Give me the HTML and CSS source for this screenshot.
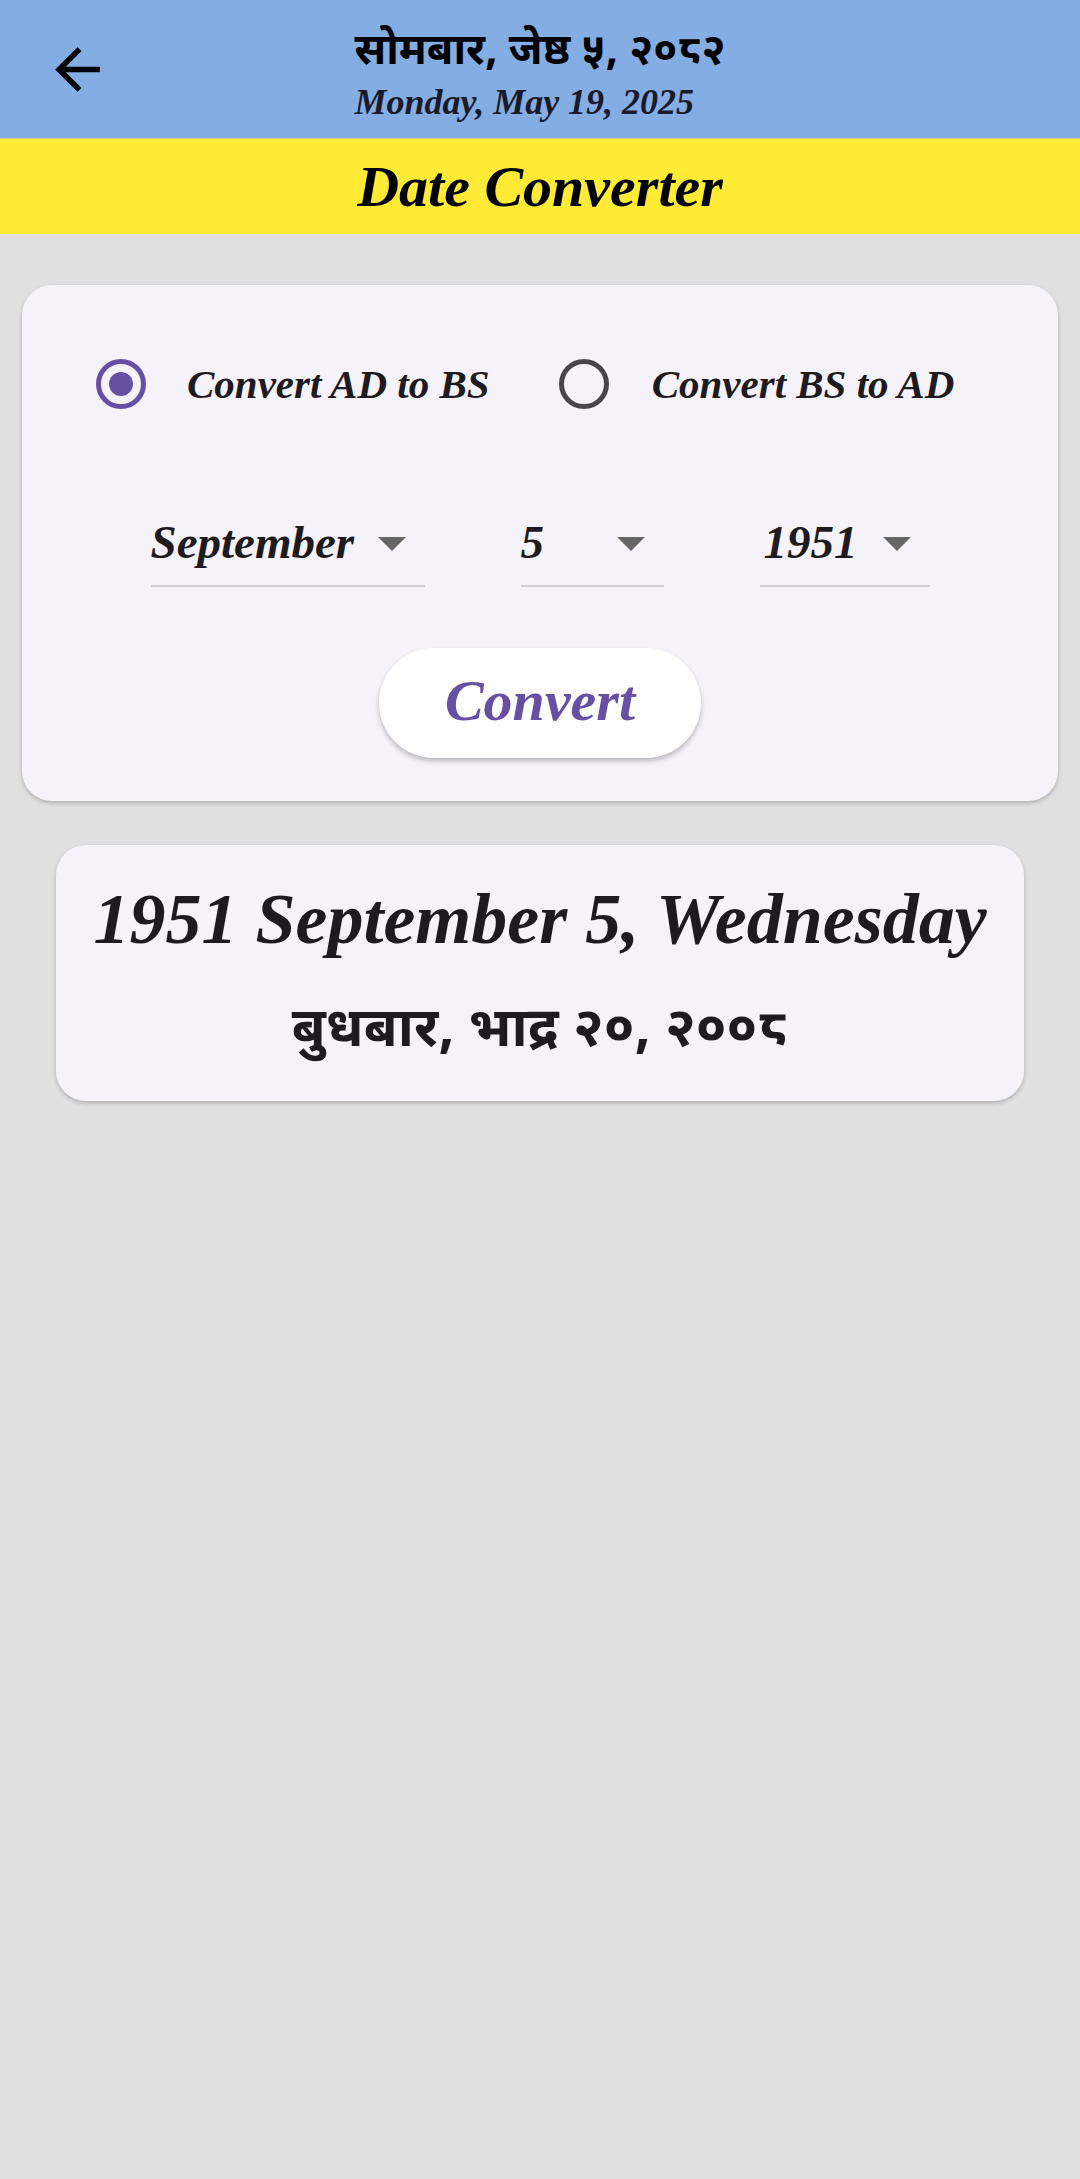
FILE: index.html
```html
<!DOCTYPE html>
<html lang="ne">
<head>
<meta charset="utf-8">
<title>Date Converter</title>
<link rel="stylesheet" href="styles.css">
</head>
<body>
<header class="appbar">
  <div class="appbar-lead">
    <svg class="back-icon" viewBox="0 0 24 24" aria-label="Back"><path d="M20 11H7.83l5.59-5.59L12 4l-8 8 8 8 1.41-1.41L7.83 13H20v-2z"/></svg>
  </div>
  <div class="appbar-title">
    <div class="title-np">सोमबार, जेष्ठ ५, २०८२</div>
    <div class="title-en">Monday, May 19, 2025</div>
  </div>
  <div></div>
</header>
<div class="banner">Date Converter</div>
<main class="content">
  <section class="card converter">
    <div class="radio-row">
      <div class="radio-item">
        <span class="radio radio-on"></span>
        <span class="radio-label">Convert AD to BS</span>
      </div>
      <div class="radio-item">
        <span class="radio radio-off"></span>
        <span class="radio-label">Convert BS to AD</span>
      </div>
    </div>
    <div class="dropdown-row">
      <div class="dropdown dd-month"><span class="dd-value">September</span><span class="dd-arrow"></span></div>
      <div class="dropdown dd-day"><span class="dd-value">5</span><span class="dd-arrow"></span></div>
      <div class="dropdown dd-year"><span class="dd-value">1951</span><span class="dd-arrow"></span></div>
    </div>
    <div class="button-row">
      <button class="convert-btn" type="button">Convert</button>
    </div>
  </section>
  <section class="card result">
    <div class="result-en">1951 September 5, Wednesday</div>
    <div class="result-np">बुधबार, भाद्र २०, २००८</div>
  </section>
</main>
</body>
</html>
```
FILE: styles.css
```css
html, body {
  margin: 0;
  padding: 0;
}
body {
  background: #e0e0e0;
  min-height: 2179px;
  font-family: "Liberation Serif", serif;
  color: #1d1b20;
}
.appbar {
  height: 138px;
  background: #84ade3;
  display: grid;
  grid-template-columns: 1fr auto 1fr;
  align-items: center;
}
.appbar-lead {
  padding-left: 44px;
  display: flex;
  align-items: center;
}
.back-icon {
  width: 67px;
  height: 67px;
  fill: #000;
}
.appbar-title {
  display: flex;
  flex-direction: column;
  align-items: flex-start;
  color: #000;
  padding-top: 14px;
}
.title-np {
  font-family: "Noto Sans Devanagari", "Noto Sans", sans-serif;
  font-weight: 700;
  font-size: 43px;
  line-height: 52px;
}
.title-en {
  font-family: "Liberation Serif", serif;
  font-style: italic;
  font-weight: 700;
  font-size: 36px;
  line-height: 44px;
  color: #1a1a2a;
}
.banner {
  height: 96px;
  background: #ffeb35;
  display: flex;
  align-items: center;
  justify-content: center;
  font-style: italic;
  font-weight: 700;
  font-size: 58px;
  color: #000;
  border-top: 1px solid #c9d08a;
  box-sizing: border-box;
}
.content {
  padding: 51px 22px;
}
.card {
  background: #f6f2fa;
  border-radius: 30px;
  box-shadow: 0 2px 4px rgba(0, 0, 0, 0.22);
}
.converter {
  padding: 69px 0 43px;
}
.radio-row {
  display: flex;
  align-items: center;
  height: 60px;
  padding-left: 74px;
}
.radio-item {
  display: flex;
  align-items: center;
}
.radio-item + .radio-item {
  margin-left: 69px;
}
.radio {
  width: 50px;
  height: 50px;
  box-sizing: border-box;
  border-radius: 50%;
  border: 5px solid #49454f;
  display: flex;
  align-items: center;
  justify-content: center;
}
.radio-on {
  border-color: #6750a4;
}
.radio-on::after {
  content: "";
  width: 24px;
  height: 24px;
  border-radius: 50%;
  background: #6750a4;
}
.radio-label {
  margin-left: 41px;
  font-style: italic;
  font-weight: 700;
  font-size: 41px;
  color: #1d1b20;
}
.radio-off + .radio-label {
  margin-left: 43px;
}
.dropdown-row {
  margin-top: 86px;
  display: flex;
  justify-content: center;
  gap: 96px;
}
.dropdown {
  height: 87px;
  box-sizing: border-box;
  border-bottom: 2px solid #d2cdd6;
  display: flex;
  align-items: flex-start;
  justify-content: space-between;
}
.dd-month { width: 274px; }
.dd-day { width: 143px; }
.dd-year { width: 170px; }
.dd-value {
  font-style: italic;
  font-weight: 700;
  font-size: 47px;
  line-height: 56px;
  padding-top: 14px;
  color: #1d1b20;
}
.dd-year .dd-value {
  padding-left: 4px;
}
.dd-arrow {
  margin-top: 37px;
  margin-right: 19px;
  width: 0;
  height: 0;
  border-left: 14px solid transparent;
  border-right: 14px solid transparent;
  border-top: 14px solid #666666;
}
.button-row {
  margin-top: 61px;
  display: flex;
  justify-content: center;
}
.convert-btn {
  width: 322px;
  height: 110px;
  border: none;
  border-radius: 55px;
  background: #ffffff;
  box-shadow: 0 3px 5px rgba(0, 0, 0, 0.25);
  font-family: "Liberation Serif", serif;
  font-style: italic;
  font-weight: 700;
  font-size: 58px;
  color: #6750a4;
  padding: 0 0 4px;
  line-height: 64px;
  display: flex;
  align-items: center;
  justify-content: center;
  box-sizing: border-box;
}
.result {
  margin: 44px 34px 0;
  height: 256px;
  box-sizing: border-box;
  padding-top: 31px;
  display: flex;
  flex-direction: column;
  align-items: center;
}
.result-en {
  font-style: italic;
  font-weight: 700;
  font-size: 72px;
  line-height: 86px;
}
.result-np {
  font-family: "Noto Sans Devanagari", "Noto Sans", sans-serif;
  font-weight: 700;
  font-size: 55px;
  line-height: 70px;
  margin-top: 36px;
}
```
